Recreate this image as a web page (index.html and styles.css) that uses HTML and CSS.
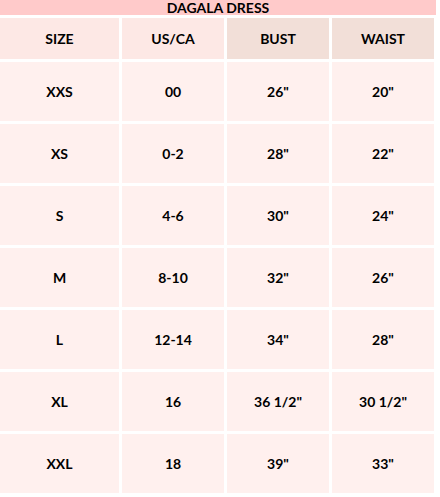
FILE: index.html
```html
<!DOCTYPE html>
<html>
<head>
<meta charset="utf-8">
<link rel="stylesheet" href="styles.css">
</head>
<body>
<div class="chart">
  <div class="title">DAGALA DRESS</div>
  <div class="grid">
    <div class="cell head">SIZE</div>
    <div class="cell head">US/CA</div>
    <div class="cell head alt">BUST</div>
    <div class="cell head alt">WAIST</div>

    <div class="cell">XXS</div><div class="cell">00</div><div class="cell">26"</div><div class="cell">20"</div>
    <div class="cell">XS</div><div class="cell">0-2</div><div class="cell">28"</div><div class="cell">22"</div>
    <div class="cell">S</div><div class="cell">4-6</div><div class="cell">30"</div><div class="cell">24"</div>
    <div class="cell">M</div><div class="cell">8-10</div><div class="cell">32"</div><div class="cell">26"</div>
    <div class="cell">L</div><div class="cell">12-14</div><div class="cell">34"</div><div class="cell">28"</div>
    <div class="cell">XL</div><div class="cell">16</div><div class="cell">36 1/2"</div><div class="cell">30 1/2"</div>
    <div class="cell">XXL</div><div class="cell">18</div><div class="cell">39"</div><div class="cell">33"</div>
  </div>
</div>
</body>
</html>
```
FILE: styles.css
```css
html, body {
  margin: 0;
  padding: 0;
  background: #ffffff;
}
body {
  font-family: Lato, "Open Sans", "Liberation Sans", sans-serif;
  font-weight: bold;
  font-size: 14px;
  color: #000;
}
.chart {
  width: 436px;
  display: flex;
  flex-direction: column;
  gap: 3px;
}
.title {
  height: 15px;
  line-height: 15px;
  background: #ffcaca;
  text-align: center;
  font-size: 14px;
}
.grid {
  width: 434px;
  display: grid;
  grid-template-columns: 119px 102px 102px 102px;
  grid-template-rows: 41px repeat(7, 59px);
  gap: 3px;
}
.cell {
  display: flex;
  align-items: center;
  justify-content: center;
  background: #fff0ee;
}
.cell.head {
  background: #fde8e5;
}
.cell.head.alt {
  background: #f2dfd8;
}
```
